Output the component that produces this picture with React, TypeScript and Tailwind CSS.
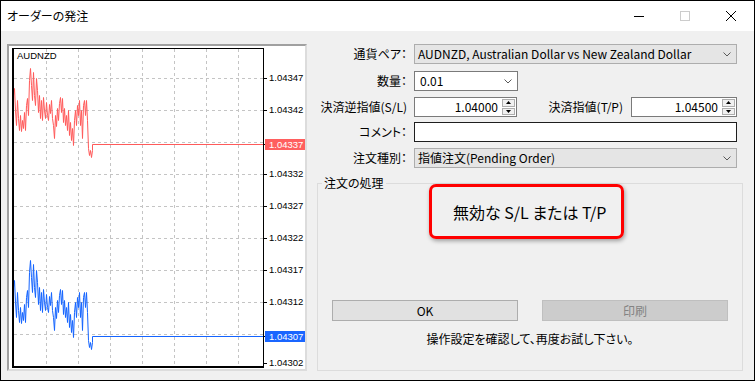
import React from 'react';

// tick data of the bid line, in window coordinates (ask line is the same shape 192px lower)
const ticks: [number, number][] = [
    [13, 95], [14, 88], [15, 110], [16, 125], [17, 100], [18, 118], [19, 130], [20, 115],
    [21, 131], [22, 120], [23, 128], [24, 112], [25, 130], [26, 105], [27, 98], [28, 115],
    [29, 80], [30, 68], [31, 85], [32, 100], [33, 72], [34, 95], [35, 105], [36, 78],
    [37, 90], [38, 112], [39, 95], [40, 118], [41, 100], [42, 120], [43, 97], [44, 110],
    [45, 118], [46, 102], [47, 115], [48, 120], [49, 104], [50, 113], [51, 100], [52, 118],
    [53, 125], [54, 138], [55, 115], [56, 126], [57, 108], [58, 120], [59, 103], [60, 97],
    [61, 112], [62, 98], [63, 122], [64, 108], [65, 125], [66, 115], [67, 130], [68, 110],
    [69, 135], [70, 122], [71, 140], [72, 128], [73, 145], [74, 120], [75, 110], [76, 125],
    [77, 105], [78, 115], [79, 100], [80, 125], [81, 110], [82, 138], [83, 105], [84, 100],
    [85, 115], [86, 100], [87, 120], [88, 148], [89, 155], [90, 150], [91, 157], [92, 150],
    [92, 144], [263, 144],
];

const toPoints = (dy: number) =>
    ticks.map(([x, y]) => `${x - 9 + 0.5},${y - 46 + dy + 0.5}`).join(' ');

const gridX = [37, 69, 101, 133, 165, 197, 229];
const gridY = [32, 64, 96, 128, 160, 192, 224, 256, 288];
const tickY = [32, 64, 98, 128, 160, 192, 224, 256, 290, 317];

const Chevron = () => (
    <svg width="8" height="5" viewBox="0 0 8 5" className="shrink-0">
        <polyline points="0.5,0.5 4,4 7.5,0.5" fill="none" stroke="#5a5a5a" strokeWidth="1" />
    </svg>
);

const Spinner = () => (
    <div className="flex h-full w-[14px] flex-col gap-[1px] py-[1px] pr-[1px]">
        <div className="flex flex-1 items-center justify-center border border-[#adadad] bg-[#f0f0f0]">
            <svg width="5" height="3" viewBox="0 0 5 3">
                <polygon points="2.5,0 5,3 0,3" fill="#000" />
            </svg>
        </div>
        <div className="flex flex-1 items-center justify-center border border-[#adadad] bg-[#f0f0f0]">
            <svg width="5" height="3" viewBox="0 0 5 3">
                <polygon points="0,0 5,0 2.5,3" fill="#000" />
            </svg>
        </div>
    </div>
);

const Chart = () => (
    <div className="h-[327px] w-[300px] shrink-0 border-2 border-[#a0a0a0] border-b-[#dcdcdc] border-r-[#dcdcdc] bg-white">
        <div className="relative h-full w-full font-['Liberation_Sans',Arial,sans-serif] text-[9.5px] text-black">
            <svg width="296" height="323" viewBox="0 0 296 323" className="absolute left-0 top-0">
                {gridX.map((x) => (
                    <line key={`x${x}`} x1={x + 0.5} y1={3} x2={x + 0.5} y2={320} stroke="#c4c4c4" strokeDasharray="3 3" />
                ))}
                {gridY.map((y) => (
                    <line key={`y${y}`} x1={5} y1={y + 0.5} x2={254} y2={y + 0.5} stroke="#c4c4c4" strokeDasharray="3 3" />
                ))}
                <polyline points={toPoints(0)} fill="none" stroke="#ff5a5a" strokeWidth="1" />
                <polyline points={toPoints(192)} fill="none" stroke="#1464ff" strokeWidth="1" />
                {/* plot frame */}
                <line x1={3} y1={2.5} x2={255} y2={2.5} stroke="#000" />
                <line x1={254.5} y1={2} x2={254.5} y2={322} stroke="#000" />
                <line x1={4} y1={2} x2={4} y2={322} stroke="#000" strokeWidth="2" />
                <line x1={3} y1={321} x2={255} y2={321} stroke="#000" strokeWidth="2" />
                {tickY.map((y) => (
                    <line key={`t${y}`} x1={255} y1={y + 0.5} x2={258} y2={y + 0.5} stroke="#000" />
                ))}
            </svg>

            <span className="absolute left-[8px] top-[4px] leading-[12px]">AUDNZD</span>

            <span className="absolute left-[260px] top-[26px] leading-[12px]">1.04347</span>
            <span className="absolute left-[260px] top-[58px] leading-[12px]">1.04342</span>
            <span className="absolute left-[256px] top-[93px] h-[11px] w-[40px] bg-[#ff5f5f] pl-[4px] leading-[11px] text-white">
                1.04337
            </span>
            <span className="absolute left-[260px] top-[122px] leading-[12px]">1.04332</span>
            <span className="absolute left-[260px] top-[154px] leading-[12px]">1.04327</span>
            <span className="absolute left-[260px] top-[186px] leading-[12px]">1.04322</span>
            <span className="absolute left-[260px] top-[218px] leading-[12px]">1.04317</span>
            <span className="absolute left-[260px] top-[250px] leading-[12px]">1.04312</span>
            <span className="absolute left-[256px] top-[285px] h-[11px] w-[40px] bg-[#1a66ff] pl-[4px] leading-[11px] text-white">
                1.04307
            </span>
            <span className="absolute left-[260px] top-[311px] leading-[12px]">1.04302</span>
        </div>
    </div>
);

const Label = ({ children }: { children: React.ReactNode }) => (
    <div className="w-[90px] shrink-0 text-right">{children}</div>
);

const OrderForm = () => (
    <div className="ml-[10px] flex w-[426px] flex-col">
        <div className="flex h-[20px] items-center">
            <Label>通貨ペア：</Label>
            <div className="ml-[7px] flex h-full w-[323px] items-center justify-between border border-[#adadad] bg-[#e5e5e5] pl-[3px] pr-[5px]">
                <span>AUDNZD, Australian Dollar vs New Zealand Dollar</span>
                <Chevron />
            </div>
        </div>

        <div className="mt-[7px] flex h-[20px] items-center">
            <Label>数量：</Label>
            <div className="ml-[7px] flex h-full w-[104px] items-center justify-between border border-[#7a7a7a] bg-white pl-[5px] pr-[5px]">
                <span>0.01</span>
                <Chevron />
            </div>
        </div>

        <div className="mt-[6px] flex h-[20px] items-center">
            <Label>決済逆指値(S/L)</Label>
            <div className="ml-[7px] flex h-full w-[103px] items-center border border-[#7a7a7a] bg-white">
                <span className="flex-1 pr-[4px] text-right">1.04000</span>
                <Spinner />
            </div>
            <div className="w-[114px] shrink-0 pr-[8px] text-right">決済指値(T/P)</div>
            <div className="flex h-full w-[106px] items-center border border-[#7a7a7a] bg-white">
                <span className="flex-1 pr-[4px] text-right">1.04500</span>
                <Spinner />
            </div>
        </div>

        <div className="mt-[5px] flex h-[20px] items-center">
            <Label>コメント：</Label>
            <div className="ml-[7px] h-full w-[323px] border border-[#1e1e1e] bg-white" />
        </div>

        <div className="mt-[6px] flex h-[20px] items-center">
            <Label>注文種別：</Label>
            <div className="ml-[7px] flex h-full w-[323px] items-center justify-between border border-[#adadad] bg-[#e5e5e5] pl-[3px] pr-[5px]">
                <span>指値注文(Pending Order)</span>
                <Chevron />
            </div>
        </div>

        <div className="relative mt-[15px] flex h-[188px] flex-col border border-[#dcdcdc]">
            <span className="absolute -top-[9px] left-[4px] bg-[#f0f0f0] px-[2px]">注文の処理</span>

            <div className="ml-[111px] flex h-[55px] w-[195px] items-center rounded-[7px] border-[3px] border-[#ff0000] pl-[21px] text-[16px] leading-[20px] shadow-[1px_2px_4px_rgba(0,0,0,0.35)]">
                無効な S/L または T/P
            </div>

            <div className="mt-[61px] flex gap-[24px] px-[14px]">
                <button className="h-[21px] w-[186px] border border-[#adadad] bg-[#e1e1e1]">OK</button>
                <button className="h-[21px] w-[186px] border border-[#bfbfbf] bg-[#cccccc] text-[#838383]">印刷</button>
            </div>

            <div className="mt-[10px] text-center">操作設定を確認して、再度お試し下さい。</div>
        </div>
    </div>
);

export default function App() {
    return (
        <div className="flex h-[381px] w-[755px] flex-col border border-black bg-[#f0f0f0] font-['Noto_Sans_CJK_JP','Noto_Sans',sans-serif] text-[12px] leading-[16px] text-black [font-feature-settings:'palt']">
            <div className="flex h-[30px] shrink-0 items-center bg-white">
                <span className="pl-[6px]">オーダーの発注</span>
                <div className="ml-auto flex h-full">
                    <div className="flex w-[46px] items-center justify-center">
                        <div className="h-px w-[10px] bg-black" />
                    </div>
                    <div className="flex w-[46px] items-center justify-center">
                        <div className="h-[10px] w-[10px] border border-[#cccccc]" />
                    </div>
                    <div className="flex w-[46px] items-center justify-center">
                        <svg width="10" height="10" viewBox="0 0 10 10">
                            <path d="M0 0 L10 10 M10 0 L0 10" stroke="#000" strokeWidth="1" />
                        </svg>
                    </div>
                </div>
            </div>

            <div className="flex flex-1 pl-[6px] pt-[13px]">
                <Chart />
                <OrderForm />
            </div>
        </div>
    );
}
